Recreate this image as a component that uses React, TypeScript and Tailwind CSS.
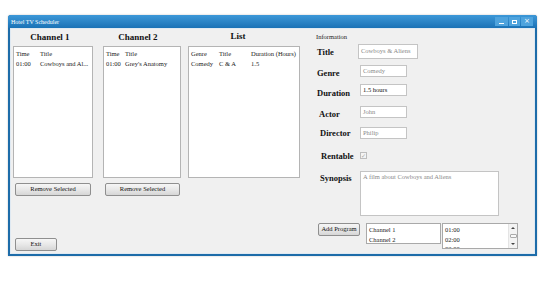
import React from "react";

const Btn = ({ label, className = "" }: { label: string; className?: string }) => (
  <div
    className={`h-[13px] flex items-center justify-center rounded-[2px] border border-[#8f8f8f] bg-linear-to-b from-[#f6f6f6] via-[#e8e8e8] to-[#d6d6d6] text-[6.5px] leading-none text-[#111] ${className}`}
  >
    {label}
  </div>
);

const Field = ({ value, className = "", dark = false }: { value: string; className?: string; dark?: boolean }) => (
  <div
    className={`border border-[#c4c4c4] bg-white px-[2px] flex items-center text-[6.5px] leading-none ${dark ? "text-[#111]" : "text-[#8a8a8a]"} ${className}`}
  >
    {value}
  </div>
);

const Label = ({ text, className = "" }: { text: string; className?: string }) => (
  <div className={`text-[8.5px] font-bold leading-none text-[#111] ${className}`}>{text}</div>
);

type Col = { title: string; width: number };

const ListView = ({ cols, rows, widthClass }: { cols: Col[]; rows: string[][]; widthClass: string }) => (
  <div className={`h-[132px] border border-[#b4b4b4] bg-white pt-[2px] pl-[2px] text-[6.5px] leading-[10px] text-[#222] ${widthClass}`}>
    <div className="flex">
      {cols.map((c) => (
        <div key={c.title} style={{ width: c.width }} className="shrink-0 whitespace-nowrap">
          {c.title}
        </div>
      ))}
    </div>
    {rows.map((r, i) => (
      <div key={i} className="flex">
        {r.map((cell, j) => (
          <div key={j} style={{ width: cols[j].width }} className="shrink-0 whitespace-nowrap">
            {cell}
          </div>
        ))}
      </div>
    ))}
  </div>
);

export default function App() {
  return (
    <div className="min-h-screen bg-white pt-[15px] pl-[8px] font-['Liberation_Serif','Times_New_Roman',serif]">
      <div className="w-[529px] rounded-t-[3px] bg-[#1d6ca9] shadow-[0_0_2px_rgba(0,0,0,0.25)]">
        {/* title bar */}
        <div className="h-[13px] rounded-t-[3px] bg-linear-to-b from-[#3c98d8] to-[#1a72b6] flex items-center pl-[3px] pr-[4px]">
          <span className="text-[6px] leading-none text-white">Hotel TV Scheduler</span>
          <div className="ml-auto flex gap-px">
            <div className="w-[13px] h-[9px] bg-[#4ea3dd] flex items-end justify-center pb-[2px]">
              <div className="w-[5px] h-px bg-white" />
            </div>
            <div className="w-[11px] h-[9px] bg-[#4ea3dd] flex items-center justify-center">
              <div className="w-[5px] h-[4px] border border-white" />
            </div>
            <div className="w-[12px] h-[9px] bg-[#4ea3dd] flex items-center justify-center text-white text-[7px] leading-none font-['DejaVu_Sans',sans-serif]">
              ×
            </div>
          </div>
        </div>

        {/* body */}
        <div className="px-[2px] pb-[2px]">
          <div className="h-[226px] border border-[#dfe9f2] bg-[#f0f0f0] flex">
            {/* left side */}
            <div className="w-[289px] pl-[2px] flex flex-col">
              <div className="flex">
                <div className="w-[80px] flex flex-col">
                  <div className="h-[17px] flex items-center justify-center pr-[6px] text-[9px] font-bold text-[#111]">Channel 1</div>
                  <ListView
                    widthClass="w-[80px]"
                    cols={[
                      { title: "Time", width: 24 },
                      { title: "Title", width: 50 },
                    ]}
                    rows={[["01:00", "Cowboys and Al..."]]}
                  />
                  <Btn label="Remove Selected" className="mt-[5px] ml-[2px] w-[76px]" />
                </div>
                <div className="w-[78px] ml-[10px] flex flex-col">
                  <div className="h-[17px] flex items-center justify-center pr-[8px] text-[9px] font-bold text-[#111]">Channel 2</div>
                  <ListView
                    widthClass="w-[78px]"
                    cols={[
                      { title: "Time", width: 19 },
                      { title: "Title", width: 50 },
                    ]}
                    rows={[["01:00", "Grey's Anatomy"]]}
                  />
                  <Btn label="Remove Selected" className="mt-[5px] ml-[2px] w-[75px]" />
                </div>
                <div className="w-[112px] ml-[7px] flex flex-col">
                  <div className="h-[17px] flex items-center justify-center pr-[12px] pb-[2px] text-[9px] font-bold text-[#111]">List</div>
                  <ListView
                    widthClass="w-[112px]"
                    cols={[
                      { title: "Genre", width: 28 },
                      { title: "Title", width: 32 },
                      { title: "Duration (Hours)", width: 48 },
                    ]}
                    rows={[["Comedy", "C & A", "1.5"]]}
                  />
                </div>
              </div>
              <Btn label="Exit" className="mt-[42px] ml-[2px] w-[42px]" />
            </div>

            {/* information panel */}
            <div className="flex-1 pl-[16px] flex flex-col">
              <div className="mt-[4px] h-[8px] text-[6.5px] leading-[8px] text-[#222]">Information</div>

              <div className="mt-[3px] h-[15px] flex items-center">
                <div className="w-[42px] pl-px pt-[1px]">
                  <Label text="Title" />
                </div>
                <Field value="Cowboys & Aliens" className="w-[60px] h-[15px] bg-[#fbfbfb]" />
              </div>

              <div className="mt-[6px] h-[12px] flex items-center">
                <div className="w-[44px] pl-px pt-[4px]">
                  <Label text="Genre" />
                </div>
                <Field value="Comedy" className="w-[47px] h-[12px]" />
              </div>

              <div className="mt-[7px] h-[12px] flex items-center">
                <div className="w-[44px] pl-px pt-[6px]">
                  <Label text="Duration" />
                </div>
                <Field value="1.5 hours" dark className="w-[47px] h-[12px]" />
              </div>

              <div className="mt-[10px] h-[12px] flex items-center">
                <div className="w-[44px] pl-[3px] pt-[4px]">
                  <Label text="Actor" />
                </div>
                <Field value="John" className="w-[47px] h-[12px]" />
              </div>

              <div className="mt-[9px] h-[12px] flex items-center">
                <div className="w-[44px] pl-[4px] pt-[1px]">
                  <Label text="Director" />
                </div>
                <Field value="Philip" className="w-[47px] h-[12px]" />
              </div>

              <div className="mt-[13px] h-[7px] flex items-center">
                <div className="w-[44px] pl-[5px] pt-[1px]">
                  <Label text="Rentable" />
                </div>
                <div className="w-[7px] h-[7px] border border-[#bdbdbd] bg-[#f4f4f4] flex items-center justify-center text-[6px] leading-none text-[#a8a8a8] font-['DejaVu_Sans',sans-serif]">
                  ✓
                </div>
              </div>

              <div className="mt-[12px] flex items-start">
                <div className="w-[44px] pl-[4px] pt-[3px]">
                  <Label text="Synopsis" />
                </div>
                <div className="w-[139px] h-[45px] border border-[#c4c4c4] bg-white px-[2px] pt-[2px] text-[6.5px] leading-none text-[#8a8a8a]">
                  A film about Cowboys and Aliens
                </div>
              </div>

              <div className="mt-[7px] flex items-start">
                <Btn label="Add Program" className="ml-[2px] w-[42px]" />
                <div className="ml-[6px] w-[75px] h-[21px] border border-[#a9a9a9] bg-white pl-[2px] pt-px text-[6.5px] leading-[9.5px] text-[#222]">
                  <div>Channel 1</div>
                  <div>Channel 2</div>
                </div>
                <div className="ml-px w-[76px] h-[26px] border border-[#a9a9a9] bg-white flex overflow-hidden">
                  <div className="flex-1 pl-[2px] pt-px text-[6.5px] leading-[9.5px] text-[#222]">
                    <div>01:00</div>
                    <div>02:00</div>
                    <div>03:00</div>
                  </div>
                  <div className="w-[9px] bg-[#f3f3f3] flex flex-col items-center justify-between py-px border-l border-[#e4e4e4]">
                    <div className="w-0 h-0 border-l-[2px] border-r-[2px] border-b-[2px] border-l-transparent border-r-transparent border-b-[#444] mt-[2px]" />
                    <div className="w-[7px] h-[4px] border border-[#aaaaaa] bg-[#f8f8f8] rounded-[1px]" />
                    <div className="w-0 h-0 border-l-[2px] border-r-[2px] border-t-[2px] border-l-transparent border-r-transparent border-t-[#444] mb-[2px]" />
                  </div>
                </div>
              </div>
            </div>
          </div>
        </div>
      </div>
    </div>
  );
}
